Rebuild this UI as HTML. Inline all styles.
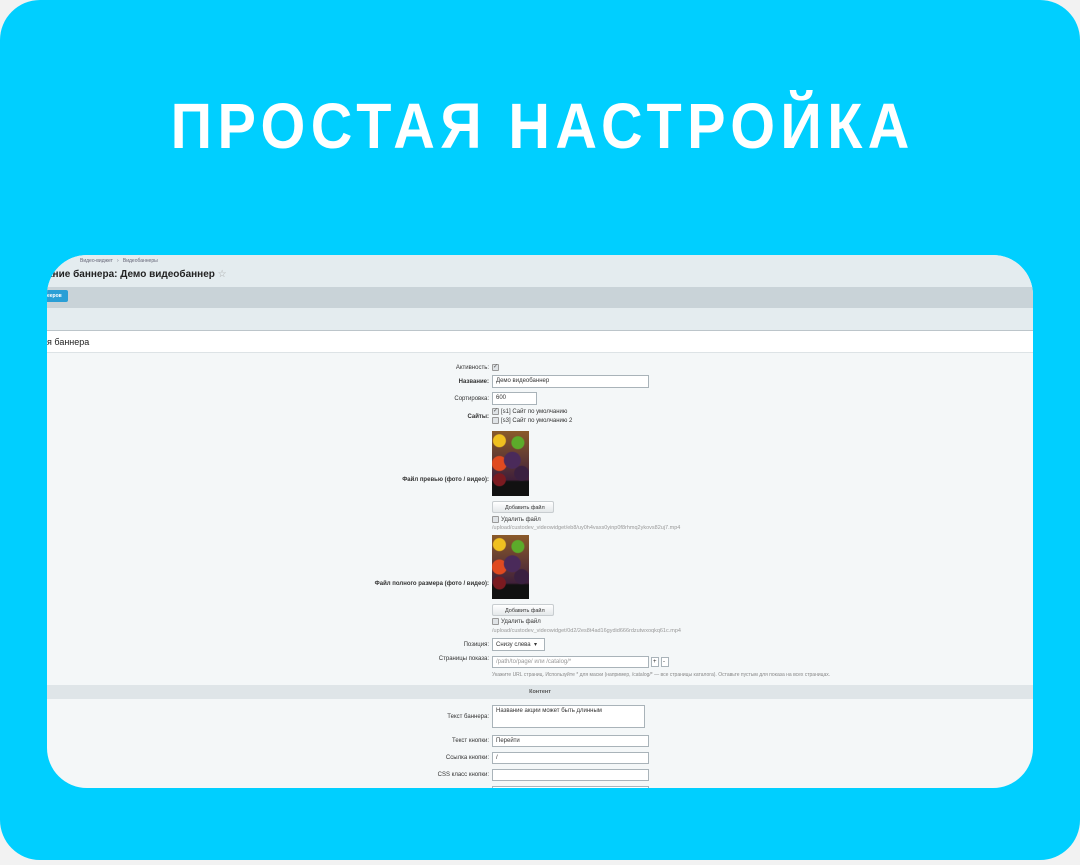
<!DOCTYPE html>
<html><head><meta charset="utf-8"><style>
*{margin:0;padding:0;box-sizing:border-box}
body{width:1080px;height:865px;background:#f2f2f2;position:relative;overflow:hidden;font-family:"Liberation Sans",Arial,sans-serif}
.card{position:absolute;left:0;top:0;width:1080px;height:860px;background:#00cfff;border-radius:40px}
h1{position:absolute;left:0;width:1080px;top:89px;text-align:center;color:#fff;font-size:64px;font-weight:bold;letter-spacing:6px;transform:scaleX(0.9);transform-origin:center;padding-left:6px}
.shot{position:absolute;left:47px;top:255px;width:986px;height:533px;border-radius:40px;overflow:hidden;background:#f4f7f8}
.a{position:absolute;font-size:6px;color:#333;white-space:nowrap}
.r{text-align:right}
.in{position:absolute;background:#fff;border:1px solid #a9b3b9;font-size:6px;padding:2px 3px;color:#333;white-space:nowrap}
.cb{position:absolute;width:7px;height:7px;border:1px solid #999;background:#dfe3e6;border-radius:1px;font-size:6px;line-height:5px;color:#555;text-align:center}
.img{position:absolute;width:37px;background:radial-gradient(circle at 20% 15%,#f0c020 0 6px,transparent 7px),radial-gradient(circle at 70% 18%,#5cab2a 0 6px,transparent 7px),radial-gradient(circle at 55% 45%,#4a2a5a 0 8px,transparent 9px),radial-gradient(circle at 20% 50%,#e04a20 0 7px,transparent 8px),radial-gradient(circle at 80% 65%,#3a2040 0 7px,transparent 8px),radial-gradient(circle at 20% 75%,#7a1a20 0 6px,transparent 7px),linear-gradient(#8a5a2a,#40203a 75%,#111 78%,#111)}
.btn{position:absolute;width:62px;height:12px;border:1px solid #c8cdd0;border-radius:2px;background:linear-gradient(#fff,#e4e8ea);font-size:5.5px;padding:3px 0 0 12px;color:#333}
</style></head><body>
<div class="card"></div>
<h1>ПРОСТАЯ НАСТРОЙКА</h1>
<div class="shot">
 <div style="position:absolute;left:0;top:0;width:986px;height:32px;background:#e4ecef"></div>
 <div class="a" style="left:33px;top:3px;font-size:5px;color:#667">Видео-виджет &nbsp; › &nbsp; Видеобаннеры</div>
 <div class="a" style="left:0;top:14px;font-size:10px;font-weight:bold;color:#222">ание баннера: Демо видеобаннер <span style="color:#aaa;font-weight:normal">☆</span></div>
 <div style="position:absolute;left:0;top:32px;width:986px;height:21px;background:#c9d3d8"></div>
 <div style="position:absolute;left:0;top:35px;width:21px;height:12px;background:#2a9fd6;border-radius:0 2px 2px 0;color:#fff;font-size:5px;font-weight:bold;padding:3px 0 0 0">ееров</div>
 <div style="position:absolute;left:0;top:53px;width:986px;height:22px;background:#e4ecef"></div>
 <div style="position:absolute;left:0;top:75px;width:986px;height:23px;background:#fff;border-top:1px solid #bcc5ca;border-bottom:1px solid #dde3e6"></div>
 <div class="a" style="left:0;top:82px;font-size:9px;color:#222">я баннера</div>

 <div class="a r" style="left:300px;width:142px;top:110px">Активность:</div><div class="cb" style="left:445px;top:109px">✓</div>
 <div class="a r" style="left:300px;width:142px;top:124px;font-weight:bold">Название:</div><div class="in" style="left:445px;top:120px;width:157px;height:13px">Демо видеобаннер</div>
 <div class="a r" style="left:300px;width:142px;top:141px">Сортировка:</div><div class="in" style="left:445px;top:137px;width:45px;height:13px">600</div>
 <div class="cb" style="left:445px;top:153px">✓</div><div class="a" style="left:454px;top:154px">[s1] Сайт по умолчанию</div>
 <div class="a r" style="left:300px;width:142px;top:159px;font-weight:bold">Сайты:</div>
 <div class="cb" style="left:445px;top:162px"></div><div class="a" style="left:454px;top:163px">[s3] Сайт по умолчанию 2</div>
 <div class="img" style="left:445px;top:176px;height:65px"></div>
 <div class="a r" style="left:250px;width:192px;top:222px;font-weight:bold">Файл превью (фото / видео):</div>
 <div class="btn" style="left:445px;top:246px">Добавить файл</div>
 <div class="cb" style="left:445px;top:261px"></div><div class="a" style="left:454px;top:262px">Удалить файл</div>
 <div class="a" style="left:445px;top:270px;color:#999;font-size:5.5px">/upload/custodev_videowidget/eb8/uy0h4vaxs0yinp0f8rhmq2ykovs82uj7.mp4</div>
 <div class="img" style="left:445px;top:280px;height:64px"></div>
 <div class="a r" style="left:250px;width:192px;top:326px;font-weight:bold">Файл полного размера (фото / видео):</div>
 <div class="btn" style="left:445px;top:349px">Добавить файл</div>
 <div class="cb" style="left:445px;top:363px"></div><div class="a" style="left:454px;top:364px">Удалить файл</div>
 <div class="a" style="left:445px;top:373px;color:#999;font-size:5.5px">/upload/custodev_videowidget/0d2/2es8t4ad16gydid666rdzutwxoqkq61c.mp4</div>
 <div class="a r" style="left:300px;width:142px;top:387px">Позиция:</div><div class="in" style="left:445px;top:383px;width:53px;height:13px">Снизу слева &nbsp;▾</div>
 <div class="a r" style="left:300px;width:142px;top:401px">Страницы показа:</div><div class="in" style="left:445px;top:401px;width:157px;height:12px;color:#999">/path/to/page/ или /catalog/*</div>
 <div class="in" style="left:604px;top:402px;width:8px;height:10px;padding:1px">+</div><div class="in" style="left:614px;top:402px;width:8px;height:10px;padding:1px">-</div>
 <div class="a" style="left:445px;top:417px;color:#888;font-size:5px">Укажите URL страниц. Используйте * для маски (например, /catalog/* — все страницы каталога). Оставьте пустым для показа на всех страницах.</div>
 <div style="position:absolute;left:0;top:430px;width:986px;height:14px;background:#dfe5e8"></div>
 <div class="a" style="left:0;width:986px;top:434px;text-align:center;color:#555;font-weight:bold;font-size:5.5px">Контент</div>
 <div class="in" style="left:445px;top:450px;width:153px;height:23px;white-space:normal">Название акции может быть длинным</div>
 <div class="a r" style="left:300px;width:142px;top:459px">Текст баннера:</div>
 <div class="a r" style="left:300px;width:142px;top:483px">Текст кнопки:</div><div class="in" style="left:445px;top:480px;width:157px;height:12px">Перейти</div>
 <div class="a r" style="left:300px;width:142px;top:500px">Ссылка кнопки:</div><div class="in" style="left:445px;top:497px;width:157px;height:12px">/</div>
 <div class="a r" style="left:300px;width:142px;top:517px">CSS класс кнопки:</div><div class="in" style="left:445px;top:514px;width:157px;height:12px"></div>
 <div class="in" style="left:445px;top:531px;width:157px;height:12px"></div>
</div>
</body></html>
